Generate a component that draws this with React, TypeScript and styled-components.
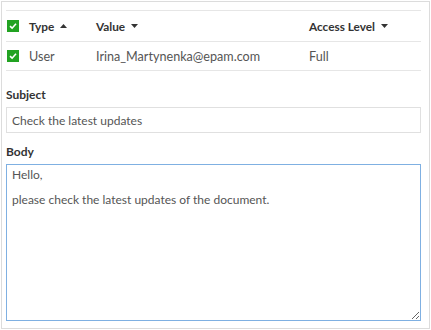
import React from "react";
import styled, { createGlobalStyle } from "styled-components";

const GlobalStyle = createGlobalStyle`
    html, body {
        margin: 0;
        padding: 0;
        background: #fff;
    }
    * {
        box-sizing: border-box;
    }
`;

const font = `"Lato", "Liberation Sans", sans-serif`;

type Sort = "asc" | "desc";

const recipients = [
    { type: "User", value: "Irina_Martynenka@epam.com", access: "Full" },
];

function SortIcon({ dir }: { dir: Sort }) {
    return (
        <svg width="7" height="4" viewBox="0 0 7 4">
            {dir === "asc" ? (
                <polygon points="0,4 7,4 3.5,0" fill="#333" />
            ) : (
                <polygon points="0,0 7,0 3.5,4" fill="#333" />
            )}
        </svg>
    );
}

function Check() {
    return (
        <CheckBox>
            <svg width="12" height="12" viewBox="0 0 12 12">
                <path d="M3 6.2 L5.1 8.2 L9 3.8" fill="none" stroke="#fff" strokeWidth="1.6" />
            </svg>
        </CheckBox>
    );
}

export default function App() {
    return (
        <>
            <GlobalStyle />
            <PanelStyled>
                <TableStyled>
                    <HeaderRow>
                        <CheckCell>
                            <Check />
                        </CheckCell>
                        <HeadCell $width={67}>
                            Type <SortIcon dir="asc" />
                        </HeadCell>
                        <HeadCell $width={213}>
                            Value <SortIcon dir="desc" />
                        </HeadCell>
                        <HeadCell>
                            Access Level <SortIcon dir="desc" />
                        </HeadCell>
                    </HeaderRow>
                    {recipients.map((r) => (
                        <BodyRow key={r.value}>
                            <CheckCell>
                                <Check />
                            </CheckCell>
                            <Cell $width={67}>{r.type}</Cell>
                            <Cell $width={213}>{r.value}</Cell>
                            <Cell>{r.access}</Cell>
                        </BodyRow>
                    ))}
                </TableStyled>

                <FieldStyled>
                    <LabelStyled>Subject</LabelStyled>
                    <InputStyled defaultValue="Check the latest updates" />
                </FieldStyled>

                <FieldStyled>
                    <LabelStyled>Body</LabelStyled>
                    <TextAreaStyled
                        defaultValue={"Hello,\n\nplease check the latest updates of the document."}
                    />
                </FieldStyled>
            </PanelStyled>
        </>
    );
}

const PanelStyled = styled.div`
    margin: 1px 0 0 1px;
    width: 429px;
    height: 328px;
    border: 1px solid #dcdcdc;
    padding: 8px 8px 0 4px;
    font-family: ${font};
    font-size: 12px;
    color: #333;
`;

const TableStyled = styled.div`
    width: 415px;
    border-top: 1px solid #e6e6e6;
    margin-bottom: 5px;
`;

const HeaderRow = styled.div`
    display: flex;
    align-items: center;
    height: 31px;
    border-bottom: 1px solid #e6e6e6;
    font-weight: 700;
    font-size: 11.8px;
    color: #333;
`;

const BodyRow = styled.div`
    display: flex;
    align-items: center;
    height: 29px;
    border-bottom: 1px solid #e6e6e6;
    font-size: 12.6px;
    color: #555;
`;

const CheckCell = styled.div`
    width: 23px;
    padding-left: 1px;
    display: flex;
    align-items: center;
`;

const CheckBox = styled.span`
    width: 12px;
    height: 12px;
    background: #22a322;
    display: flex;
`;

const HeadCell = styled.div<{ $width?: number }>`
    width: ${(p) => (p.$width ? `${p.$width}px` : "auto")};
    display: flex;
    align-items: center;
    gap: 6px;
`;

const Cell = styled.div<{ $width?: number }>`
    width: ${(p) => (p.$width ? `${p.$width}px` : "auto")};
`;

const FieldStyled = styled.div`
    display: flex;
    flex-direction: column;
    width: 415px;
`;

const LabelStyled = styled.label`
    font-weight: 700;
    color: #333;
    line-height: 16px;
    margin: 11px 0 4px;
`;

const InputStyled = styled.input`
    height: 26px;
    border: 1px solid #e0e0e0;
    padding: 0 5px;
    font-family: ${font};
    font-size: 12px;
    color: #555;
    outline: none;
`;

const TextAreaStyled = styled.textarea`
    height: 157px;
    border: 1px solid #7fb0e2;
    padding: 4px 5px;
    font-family: ${font};
    font-size: 12px;
    line-height: 12.5px;
    color: #555;
    outline: none;
    resize: vertical;
`;
